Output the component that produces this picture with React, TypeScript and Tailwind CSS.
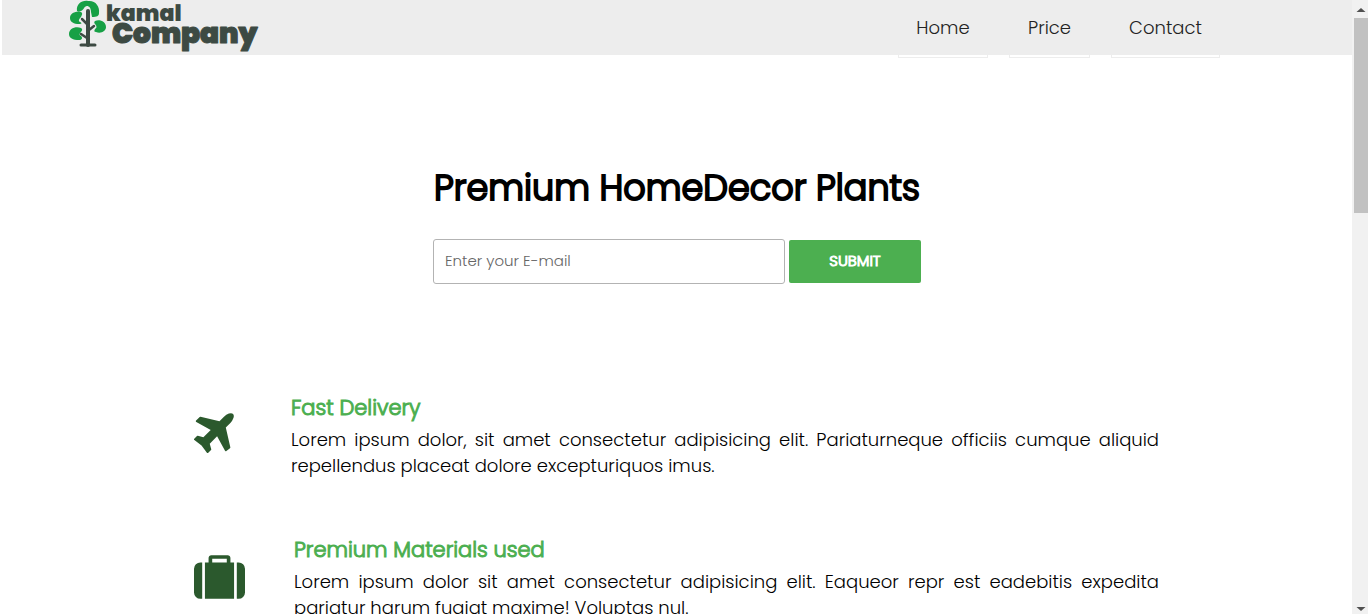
import React from "react";

const navItems = [
  { label: "Home", width: "w-[90px]" },
  { label: "Price", width: "w-[81px]" },
  { label: "Contact", width: "w-[109px]" },
];

function Logo() {
  return (
    <a href="#home" aria-label="kamal Company" className="block">
      <svg width="204" height="54" viewBox="0 0 204 54">
        <g fill="#17a045">
          <path d="M8 11C7 4 13 0 19 1c7-1 12 5 11 12 0 3-2 4-7 4l-1-5c0-4-2-6-4-6-3 0-3 4-6 5-2 1-3 1-4 0z" />
          <path d="M12 12c2 1 1 3 0 5-2 2-3 4-1 5 2 1 2 2-1 2C5 24 1 22 1 18c0-4 4-7 11-6z" />
          <path d="M26 21c5-2 11 1 11 6 0 4-5 7-10 5-2 0-2-1-1-3 2-1 2-3 0-5-1-1-1-2 0-3z" />
          <path d="M12 28c2 1 1 3 0 4-2 2-2 3 0 4 2 2 1 4-2 4-6 0-10-2-10-6 0-5 6-8 12-6z" />
        </g>
        <g fill="none" stroke="#3d4a43" strokeLinecap="round" strokeLinejoin="round">
          <path d="M19 11v34" strokeWidth="4" />
          <path d="M18 24l-5-5M20 30l5-4M18 38l-6-4" strokeWidth="2.500" />
          <path d="M12 45h14" strokeWidth="3" />
        </g>
        <g fill="#3d4a43" fontFamily="Poppins, 'DejaVu Sans', sans-serif" fontWeight="900">
          <text x="37" y="21" fontSize="22">kamal</text>
          <text x="43" y="43" fontSize="28" stroke="#3d4a43" strokeLinejoin="round" strokeWidth="1">Company</text>
        </g>
      </svg>
    </a>
  );
}

function PlaneIcon() {
  return (
    <svg className="h-10 w-10" viewBox="192 128 1408 1408" fill="#2b592d" aria-hidden="true">
      <path d="M1568 160q44 52 12 148t-108 172l-161 161 160 696q5 19-12 33l-128 96q-7 6-19 6-4 0-7-1-15-3-21-16l-279-508-259 259 53 194q5 17-8 31l-96 96q-9 9-23 9h-2q-15-2-24-13l-189-252-252-189q-11-7-13-23-1-13 9-25l96-97q9-9 23-9 6 0 8 1l194 53 259-259-508-279q-14-8-17-24-2-16 9-27l128-128q14-13 30-8l665 159 160-160q76-76 172-108t148 12z" />
    </svg>
  );
}

function SuitcaseIcon() {
  return (
    <svg className="h-11 w-[51px]" viewBox="0 128 1792 1536" fill="#2b592d" aria-hidden="true">
      <path d="M640 384h512v-128h-512v128zm-352 0v1280h-64q-92 0-158-66t-66-158v-832q0-92 66-158t158-66h64zm1120 0v1280h-1024v-1280h128v-160q0-40 28-68t68-28h576q40 0 68 28t28 68v160h128zm384 224v832q0 92-66 158t-158 66h-64v-1280h64q92 0 158 66t66 158z" />
    </svg>
  );
}

interface FeatureProps {
  icon: React.ReactNode;
  iconColumn: string;
  title: string;
  lead: string;
  rest: string;
}

function Feature({ icon, iconColumn, title, lead, rest }: FeatureProps) {
  return (
    <article className="flex pb-[54px]">
      <div className={`shrink-0 pt-[22px] ${iconColumn}`}>{icon}</div>
      <div className="min-w-0 flex-1">
        <h2 className="mb-0.5 text-[21px] leading-[34px] font-light text-[#4caf50] [-webkit-text-stroke:1px_#4caf50]">{title}</h2>
        <p className="text-lg leading-[26px] font-light text-black">
          <span className="block whitespace-nowrap [text-align-last:justify]">{lead}</span>
          <span className="block whitespace-nowrap">{rest}</span>
        </p>
      </div>
    </article>
  );
}

function Scrollbar() {
  return (
    <div aria-hidden="true" className="flex w-4 shrink-0 flex-col items-center bg-[#f1f1f1]">
      <svg className="h-[18px] w-4 shrink-0" viewBox="0 0 16 18" fill="#505050">
        <path d="M9 8l4.500 4h-9z" />
      </svg>
      <div className="h-[195px] w-full border-l-2 border-[#f1f1f1] bg-[#c1c1c1]" />
      <svg className="mt-auto h-4 w-4 shrink-0" viewBox="0 0 16 16" fill="#505050">
        <path d="M4.500 9h9L9 13z" />
      </svg>
    </div>
  );
}

export default function App() {
  return (
    <div className="flex h-screen overflow-hidden bg-white font-[Poppins,Inter,sans-serif]">
      <div className="min-w-0 flex-1 overflow-hidden pl-0.5">
        <header className="flex h-[55px] items-start justify-between bg-[#ededed] pr-[132px] pl-[67px]">
          <Logo />
          <nav className="flex gap-[21px]">
            {navItems.map((item) => (
              <a
                key={item.label}
                href={`#${item.label.toLowerCase()}`}
                className={`flex h-[58px] items-center justify-center border border-[#ededed] pb-0.5 text-lg font-light text-[#222] ${item.width}`}
              >
                {item.label}
              </a>
            ))}
          </nav>
        </header>

        <main>
          <section className="flex flex-col items-center pt-[105px]">
            <h1 className="text-[35px] leading-[56px] font-light text-black [-webkit-text-stroke:2px_#000]">
              Premium HomeDecor Plants
            </h1>
            <form className="mt-[23px] flex items-center gap-1" onSubmit={(e) => e.preventDefault()}>
              <input
                type="email"
                aria-label="E-mail"
                placeholder="Enter your E-mail"
                className="h-[45px] w-[352px] rounded-[3px] border border-[#b3b3b3] px-[11px] pb-0.5 text-[15px] font-light outline-none placeholder:text-[#666]"
              />
              <button
                type="submit"
                className="h-[43px] w-[132px] rounded-xs bg-[#4caf50] text-[15px] font-light text-white [-webkit-text-stroke:1px_#fff]"
              >
                SUBMIT
              </button>
            </form>
          </section>

          <section className="mt-[107px] pr-[193px] pl-48">
            <Feature
              icon={<PlaneIcon />}
              iconColumn="w-[97px]"
              title="Fast Delivery"
              lead="Lorem ipsum dolor, sit amet consectetur adipisicing elit. Pariaturneque officiis cumque aliquid"
              rest="repellendus placeat dolore excepturiquos imus."
            />
            <Feature
              icon={<SuitcaseIcon />}
              iconColumn="w-[100px]"
              title="Premium Materials used"
              lead="Lorem ipsum dolor sit amet consectetur adipisicing elit. Eaqueor repr est eadebitis expedita"
              rest="pariatur harum fugiat maxime! Voluptas nul."
            />
          </section>
        </main>
      </div>
      <Scrollbar />
    </div>
  );
}
